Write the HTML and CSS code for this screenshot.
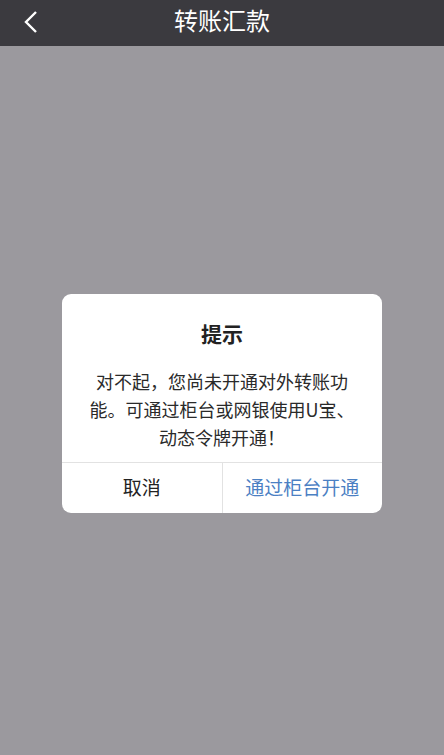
FILE: index.html
```html
<!DOCTYPE html>
<html lang="zh-CN">

<head>
    <meta charset="UTF-8">
    <meta name="viewport" content="width=device-width, initial-scale=1.0">
    <title>转账汇款</title>
    <link rel="stylesheet" href="styles.css">
</head>

<body>
    <div class="topbar">
        <div class="back">
            <svg width="16" height="24" viewBox="0 0 16 24">
                <polyline points="13,2 3,12 13,22" fill="none" stroke="#fff" stroke-width="2.4" />
            </svg>
        </div>
        <div class="title">转账汇款</div>
    </div>
    <div class="mask">
        <div class="dialog">
            <div class="dialog-title">提示</div>
            <div class="dialog-text">对不起，您尚未开通对外转账功能。可通过柜台或网银使用U宝、动态令牌开通！</div>
            <div class="dialog-btns">
                <div class="btn cancel">取消</div>
                <div class="btn ok">通过柜台开通</div>
            </div>
        </div>
    </div>
</body>

</html>
```

FILE: styles.css
```css
html,
body {
    margin: 0;
    height: 100%;
}

body {
    font-family: "Noto Sans CJK SC", "Noto Sans", sans-serif;
    background: #9b999e;
    display: flex;
    flex-direction: column;
}

.topbar {
    height: 46px;
    background: #3b3a3f;
    display: flex;
    align-items: center;
    justify-content: center;
    position: relative;
}

.topbar .back {
    position: absolute;
    left: 23px;
    top: 10px;
}

.topbar .title {
    color: #fff;
    font-size: 24px;
    margin-top: -8px;
}

.mask {
    flex: 1;
    display: flex;
    flex-direction: column;
    align-items: center;
}

.dialog {
    margin-top: 248px;
    width: 320px;
    background: #fff;
    border-radius: 9px;
    overflow: hidden;
}

.dialog-title {
    padding-top: 25px;
    line-height: 28px;
    font-size: 21px;
    font-weight: bold;
    color: #222;
    text-align: center;
}

.dialog-text {
    margin-top: 20px;
    padding: 0 26px 11px;
    font-size: 18px;
    line-height: 28px;
    color: #2a2a2a;
    text-align: center;
}

.dialog-btns {
    display: flex;
    border-top: 1px solid #e2e2e2;
}

.btn {
    flex: 1;
    height: 50px;
    line-height: 48px;
    text-align: center;
    font-size: 19px;
}

.cancel {
    color: #222;
    border-right: 1px solid #e2e2e2;
}

.ok {
    color: #4b80c3;
}
```
